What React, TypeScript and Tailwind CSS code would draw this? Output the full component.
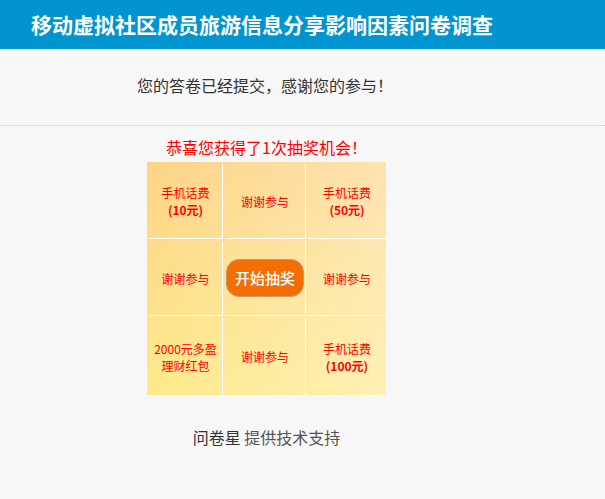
import React from "react";

const font = { fontFamily: '"Noto Sans CJK SC", "Noto Sans", sans-serif' };

type Cell = { kind: "text"; lines: React.ReactNode } | { kind: "button" };

const cells: Cell[] = [
  { kind: "text", lines: (<><div>手机话费</div><div className="font-bold">(10元)</div></>) },
  { kind: "text", lines: <div>谢谢参与</div> },
  { kind: "text", lines: (<><div>手机话费</div><div className="font-bold">(50元)</div></>) },
  { kind: "text", lines: <div>谢谢参与</div> },
  { kind: "button" },
  { kind: "text", lines: <div>谢谢参与</div> },
  { kind: "text", lines: (<><div>2000元多盈</div><div>理财红包</div></>) },
  { kind: "text", lines: <div>谢谢参与</div> },
  { kind: "text", lines: (<><div>手机话费</div><div className="font-bold">(100元)</div></>) },
];

export default function App() {
  return (
    <div className="min-h-[499px] w-[605px] bg-[#f7f7f7]" style={font}>
      <div className="flex h-[49px] items-center bg-[#0095d0] pl-[31px] text-[21px] font-bold text-white">
        移动虚拟社区成员旅游信息分享影响因素问卷调查
      </div>
      <div className="h-[77px] border-b border-dotted border-[#c8c8c8]">
        <div className="w-[530px] pt-[24px] text-center text-[16px] leading-[24px] text-[#333]">
          您的答卷已经提交，感谢您的参与！
        </div>
      </div>
      <div className="flex w-[533px] flex-col items-center">
        <div className="mt-[11px] text-[16px] leading-[20px] text-[#ff0000]">恭喜您获得了1次抽奖机会！</div>
        <div className="mt-[5px] grid h-[233px] w-[239px] grid-cols-[76px_83px_80px] grid-rows-[77px_77px_79px] bg-[linear-gradient(to_right,rgba(255,255,255,0),rgba(255,255,255,0.35)),linear-gradient(to_bottom,#fdd486,#fdea8c)]">
          {cells.map((c, i) => {
            const col = i % 3;
            const row = Math.floor(i / 3);
            const br = col < 2 ? "border-r" : "";
            const bb = row < 2 ? "border-b" : "";
            return (
              <div key={i} className="pl-[2px] pt-[2px]">
                <div className={`flex h-full items-center justify-center border-white ${br} ${bb}`}>
                  {c.kind === "button" ? (
                    <div className="flex h-[38px] w-[78px] items-center justify-center rounded-[13px] border border-[#c99a6a] bg-[#f36f05] text-[15px] font-medium text-white">
                      开始抽奖
                    </div>
                  ) : (
                    <div className="text-center text-[12px] leading-[17px] text-[#ff0000]">{c.lines}</div>
                  )}
                </div>
              </div>
            );
          })}
        </div>
        <div className="mt-[30px] text-[16px] leading-[24px]">
          <span className="text-[#333]">问卷星</span> <span className="text-[#555]">提供技术支持</span>
        </div>
      </div>
    </div>
  );
}
